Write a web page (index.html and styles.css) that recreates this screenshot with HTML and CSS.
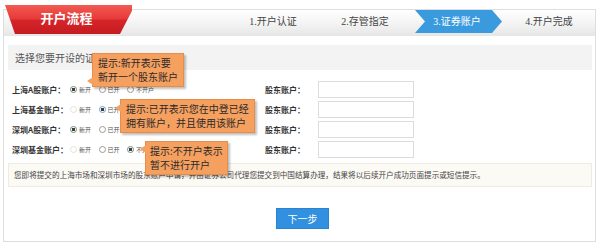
FILE: index.html
```html
<!DOCTYPE html>
<html lang="zh-CN">
<head>
    <meta charset="UTF-8">
    <meta name="viewport" content="width=device-width, initial-scale=1.0">
    <title>开户流程 - 证券账户</title>
    <link rel="stylesheet" href="styles.css">
</head>
<body>
    <div class="card">
        <!-- Flow header -->
        <div class="flow-bar">
            <div class="flow-title">开户流程</div>
            <ol class="steps">
                <li>1.开户认证</li>
                <li>2.存管指定</li>
                <li class="active">3.证券账户</li>
                <li>4.开户完成</li>
            </ol>
        </div>

        <div class="section-title">选择您要开设的证券账户</div>

        <!-- Account rows -->
        <div class="rows">
            <div class="row">
                <span class="label">上海A股账户：</span>
                <span class="opts">
                    <span class="opt"><i class="radio checked"></i>新开</span>
                    <span class="opt"><i class="radio"></i>已开</span>
                    <span class="opt"><i class="radio"></i>不开户</span>
                </span>
                <span class="label">股东账户：</span>
                <input class="acct" type="text">
            </div>
            <div class="row">
                <span class="label">上海基金账户：</span>
                <span class="opts">
                    <span class="opt"><i class="radio faded"></i>新开</span>
                    <span class="opt"><i class="radio checked blue"></i>已开</span>
                    <span class="opt"><i class="radio"></i>不开户</span>
                </span>
                <span class="label">股东账户：</span>
                <input class="acct" type="text">
            </div>
            <div class="row">
                <span class="label">深圳A股账户：</span>
                <span class="opts">
                    <span class="opt"><i class="radio checked"></i>新开</span>
                    <span class="opt"><i class="radio"></i>已开</span>
                    <span class="opt"><i class="radio"></i>不开户</span>
                </span>
                <span class="label">股东账户：</span>
                <input class="acct" type="text">
            </div>
            <div class="row">
                <span class="label">深圳基金账户：</span>
                <span class="opts">
                    <span class="opt"><i class="radio faded"></i>新开</span>
                    <span class="opt"><i class="radio"></i>已开</span>
                    <span class="opt"><i class="radio checked"></i>不开户</span>
                </span>
                <span class="label">股东账户：</span>
                <input class="acct" type="text">
            </div>
        </div>

        <div class="notice">您即将提交的上海市场和深圳市场的股东账户申请，并由证券公司代理您提交到中国结算办理，结果将以后续开户成功页面提示或短信提示。</div>

        <div class="actions">
            <button class="btn-next">下一步</button>
        </div>

        <!-- Hint bubbles -->
        <div class="tip tip-new">提示:新开表示要<br>新开一个股东账户</div>
        <div class="tip tip-open">提示:已开表示您在中登已经<br>拥有账户，并且使用该账户</div>
        <div class="tip tip-none">提示:不开户表示<br>暂不进行开户</div>
    </div>
</body>
</html>
```

FILE: styles.css
```css
* {
    box-sizing: border-box;
    margin: 0;
    padding: 0;
}

body {
    font-family: "Noto Sans CJK SC", sans-serif;
    background-color: #fff;
    color: #333;
}

.card {
    position: relative;
    width: 593px;
    margin: 9px 0 0 3px;
    border: 1px solid #dedede;
    padding-bottom: 12px;
}

/* header */
.flow-bar {
    display: flex;
    align-items: flex-start;
    height: 26px;
    background: linear-gradient(#ffffff, #f4f4f4 50%, #e6e6e6);
}

.flow-title {
    width: 130px;
    height: 29px;
    margin: -5px 0 0 1px;
    padding-top: 4px;
    padding-right: 4px;
    text-align: center;
    color: #fff;
    font-size: 13px;
    font-weight: bold;
    line-height: 18px;
    background: linear-gradient(#f25a52, #e63a38 48%, #d6252a 52%, #c41b20);
    clip-path: polygon(0 0, 130px 0, 115px 29px, 10px 29px);
}

.steps {
    display: flex;
    list-style: none;
    margin-left: 95px;
}

.steps li {
    width: 92px;
    height: 23px;
    line-height: 23px;
    text-align: center;
    font-family: "Liberation Serif", "Noto Sans CJK SC", serif;
    font-size: 10px;
    color: #444;
}

.steps li.active {
    color: #fff;
    background-color: #3a9ade;
    clip-path: polygon(4px 0, 81px 0, 91px 11.5px, 81px 23px, 4px 23px, 14px 11.5px);
}

/* section */
.section-title {
    height: 25px;
    margin: 9px 3px 0 4px;
    padding-left: 7px;
    line-height: 25px;
    font-size: 10px;
    color: #555;
    background-color: #f4f3f4;
}

.rows {
    margin-top: 9px;
    padding-left: 8px;
}

.row {
    display: grid;
    grid-template-columns: 58px 195px 53px 96px;
    align-items: center;
    height: 20px;
}

.label {
    font-size: 8px;
    font-weight: bold;
    color: #333;
    white-space: nowrap;
}

.opts {
    display: flex;
    align-items: center;
}

.opt {
    display: flex;
    align-items: center;
    gap: 2px;
    width: 28.5px;
    font-size: 6px;
    color: #555;
    white-space: nowrap;
}

.radio {
    display: inline-block;
    width: 7px;
    height: 7px;
    border: 1px solid #9a9a9a;
    border-radius: 50%;
    background-color: #fff;
}

.radio.checked {
    border-color: #6f8f80;
    background: radial-gradient(circle, #3e3e3e 0 1.5px, #fff 2px);
}

.radio.blue {
    border-color: #6a9fd0;
}

.radio.faded {
    border-color: #e2e2e2;
}

.acct {
    width: 96px;
    height: 17px;
    border: 1px solid #dcdcdc;
    background-color: #fff;
    outline: none;
}

.notice {
    height: 24px;
    margin: 4px 3px 0 4px;
    padding: 0 5px;
    line-height: 22px;
    font-size: 7.6px;
    color: #444;
    white-space: nowrap;
    background-color: #fcfaf4;
    border: 1px solid #f0ebdf;
}

.actions {
    margin-top: 17px;
    text-align: center;
}

.btn-next {
    width: 53px;
    height: 21px;
    margin-left: 6px;
    border: 1px solid #2b82cf;
    background-color: #3191e0;
    color: #fff;
    font-family: "Noto Sans CJK SC", sans-serif;
    font-size: 10px;
    cursor: pointer;
}

/* hint bubbles */
.tip {
    position: absolute;
    padding: 2px 5px;
    font-size: 10px;
    line-height: 14px;
    color: #2a2a2a;
    white-space: nowrap;
    background-color: #f6a060;
    border: 1px solid #e88c48;
    box-shadow: 2px 2px 2px rgba(0, 0, 0, 0.25);
}

.tip::before {
    content: "";
    position: absolute;
    left: -6px;
    border-top: 4px solid transparent;
    border-bottom: 4px solid transparent;
    border-right: 6px solid #f6a060;
}

.tip-new {
    left: 88px;
    top: 43px;
}

.tip-new::before {
    bottom: 1px;
}

.tip-open {
    left: 116px;
    top: 89px;
}

.tip-open::before {
    top: 4px;
}

.tip-none {
    left: 141px;
    top: 131px;
    padding: 2px 4px;
}

.tip-none::before {
    top: 3px;
}
```
